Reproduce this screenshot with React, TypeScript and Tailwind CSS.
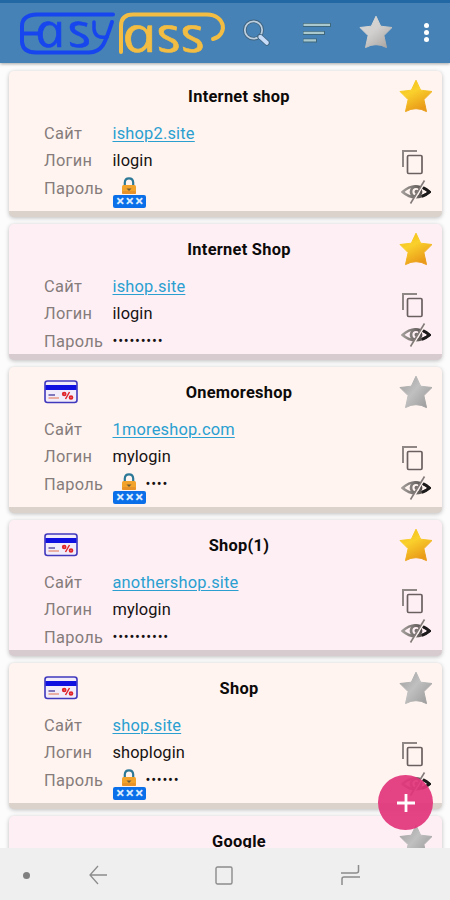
import React from "react";

type Entry = {
  title: string;
  site: string;
  login: string;
  dots: string;
  starred: boolean;
  card: boolean;
  locked: boolean;
};

const entries: Entry[] = [
  { title: "Internet shop", site: "ishop2.site", login: "ilogin", dots: "", starred: true, card: false, locked: true },
  { title: "Internet Shop", site: "ishop.site", login: "ilogin", dots: "•••••••••", starred: true, card: false, locked: false },
  { title: "Onemoreshop", site: "1moreshop.com", login: "mylogin", dots: "••••", starred: false, card: true, locked: true },
  { title: "Shop(1)", site: "anothershop.site", login: "mylogin", dots: "••••••••••", starred: true, card: true, locked: false },
  { title: "Shop", site: "shop.site", login: "shoplogin", dots: "••••••", starred: false, card: true, locked: true },
];

function Gradients() {
  return (
    <svg width="0" height="0" className="absolute">
      <defs>
        <linearGradient id="gold" x1="0" y1="0" x2="0.5" y2="1">
          <stop offset="0" stopColor="#f0bd14" />
          <stop offset="0.45" stopColor="#fad02c" />
          <stop offset="1" stopColor="#e99a18" />
        </linearGradient>
        <linearGradient id="silver" x1="0" y1="0" x2="1" y2="0.8">
          <stop offset="0" stopColor="#9c9c9c" />
          <stop offset="0.5" stopColor="#c0c0c0" />
          <stop offset="1" stopColor="#9c9c9c" />
        </linearGradient>
        <linearGradient id="silverLight" x1="0" y1="0" x2="0.8" y2="1">
          <stop offset="0" stopColor="#d8d8d8" />
          <stop offset="0.5" stopColor="#d2d0ce" />
          <stop offset="1" stopColor="#aaa7a5" />
        </linearGradient>
        <linearGradient id="eye" x1="0" y1="0" x2="30" y2="0" gradientUnits="userSpaceOnUse">
          <stop offset="0" stopColor="#a8a29f" />
          <stop offset="0.55" stopColor="#6a6462" />
          <stop offset="1" stopColor="#1c1a1a" />
        </linearGradient>
      </defs>
    </svg>
  );
}

function Star({ fill }: { fill: string }) {
  return (
    <svg width="34" height="34" viewBox="0 0 34 34" className="shrink-0">
      <path
        d="M17 1.2 L21.7 11.2 L33 12.5 L24.9 20.6 L27.5 32.6 Q22 29.5 17 29.7 Q12 29.5 6.5 32.6 L9.1 20.6 L1 12.5 L12.3 11.2 Z"
        fill={fill}
        stroke={fill}
        strokeWidth="1"
        strokeLinejoin="round"
      />
    </svg>
  );
}

function Logo() {
  return (
    <svg width="210" height="50" viewBox="17 7 210 50" fill="none" className="shrink-0 overflow-visible">
      <g stroke="#1746ee" strokeWidth="4" strokeLinecap="round">
        <path d="M113 13.5 H37 Q22 14 22 25 V41 Q23 51.5 36 51.5 H89 C102 51 105 43 112 21" />
        <path d="M23 32.5 H40" />
        <path d="M94 21 V28 Q95 38 107 36" strokeWidth="3.5" />
      </g>
      <g stroke="#f2bd42" strokeWidth="4" strokeLinecap="round">
        <path d="M121 51 V25 Q121 13.5 133 13.5 H207 C226 14 228 34 213 38" />
      </g>
      <g fontFamily="'Open Sans', sans-serif" fontStyle="italic" fontWeight="400" strokeWidth="0.6">
        <g fill="#1746ee" stroke="#1746ee" fontSize="46.500">
          <text transform="translate(38 46) scale(1.14 1) skewX(12)">a</text>
          <text transform="translate(71 46) scale(1.15 1) skewX(12)">s</text>
        </g>
        <g fill="#f2bd42" stroke="#f2bd42" fontSize="49">
          <text transform="translate(125.500 50.500) scale(1.24 1) skewX(12)">a</text>
          <text transform="translate(160 50.500) scale(1.13 1) skewX(12)">s</text>
          <text transform="translate(184 50.500) scale(1.13 1) skewX(12)">s</text>
        </g>
      </g>
    </svg>
  );
}

function SearchIcon() {
  return (
    <svg width="28" height="28" viewBox="0 0 28 28" fill="none" className="shrink-0">
      <circle cx="10.500" cy="11" r="8.7" stroke="#40627c" strokeWidth="3.6" />
      <circle cx="10.500" cy="11" r="8.7" stroke="#bccfe0" strokeWidth="1.8" />
      <path d="M17 17.5 L24 24" stroke="#40627c" strokeWidth="5.4" strokeLinecap="round" />
      <path d="M17.300 17.800 L23.8 23.8" stroke="#c6dcf8" strokeWidth="4" strokeLinecap="round" />
    </svg>
  );
}

function SortIcon() {
  return (
    <svg width="30" height="22" viewBox="0 0 30 22" fill="none" className="shrink-0">
      <path d="M1 3 H29 M1 11 H23 M1 18.500 H15" stroke="#3f687d" strokeWidth="4" />
      <path d="M1.500 2.800 H28 M1.500 10.800 H22 M1.500 18.300 H14" stroke="#a9c9cf" strokeWidth="2.200" />
    </svg>
  );
}

function CreditCard() {
  return (
    <svg width="34" height="24" viewBox="0 0 34 24" fill="none">
      <rect x="1" y="1" width="32" height="21.500" rx="2.500" fill="#f2ecfa" stroke="#4038bd" strokeWidth="1.600" />
      <rect x="1.500" y="5" width="31" height="5" fill="#1010e0" />
      <path d="M4.500 15 H11" stroke="#5a51a8" strokeWidth="1.500" />
      <path d="M4.500 18 H15" stroke="#e99a85" strokeWidth="1.500" />
      <path d="M21.500 19 L25.500 12" stroke="#e0242a" strokeWidth="1.500" />
      <circle cx="20.200" cy="14" r="1.400" stroke="#e0242a" strokeWidth="1.900" />
      <circle cx="27" cy="17.500" r="1.400" stroke="#e0242a" strokeWidth="1.900" />
    </svg>
  );
}

function Lock() {
  return (
    <svg width="16" height="18" viewBox="0 0 16 18" fill="none" className="shrink-0">
      <path d="M3.800 9 V5.500 Q4 1.400 8 1.400 Q12 1.400 12.200 5.500 V9" stroke="#2c7896" strokeWidth="2.200" />
      <rect x="1" y="8" width="14" height="9" rx="1.500" fill="#f2a32c" />
      <rect x="1" y="14" width="14" height="3" rx="1.500" fill="#e8922a" />
      <path d="M5.500 11.500 H10.500 L8 14 Z" fill="#6d5a36" />
    </svg>
  );
}

function CopyIcon() {
  return (
    <svg width="23" height="26" viewBox="0 0 23 26" fill="none">
      <path d="M2 18 V2 H16" stroke="#8f8786" strokeWidth="2" />
      <rect x="6.500" y="6.500" width="14.500" height="18" rx="1.200" stroke="#6b6060" strokeWidth="1.700" />
    </svg>
  );
}

function EyeIcon() {
  return (
    <svg width="30" height="26" viewBox="0 0 30 26" fill="none">
      <path d="M1.500 13 Q14 1.500 28.500 13 Q14 23.500 1.500 13 Z" stroke="url(#eye)" strokeWidth="2.500" />
      <path d="M22 8.600 Q25.500 10 28.500 13 Q25.500 15.800 21 17.300" stroke="#1c1a1a" strokeWidth="2.800" />
      <circle cx="15" cy="12.700" r="5" stroke="url(#eye)" strokeWidth="2.800" />
      <circle cx="15.500" cy="12.700" r="2" fill="#77706e" />
      <path d="M11 24.500 L24.300 2.500" stroke="#fff4f1" strokeWidth="1.600" />
      <path d="M9.500 24.500 L23.500 1.500" stroke="#827b79" strokeWidth="1.600" />
    </svg>
  );
}

function TitleRow({ title, card, starred }: { title: string; card: boolean; starred: boolean }) {
  return (
    <div className="grid h-[49px] shrink-0 grid-cols-[52px_1fr_52px] items-center">
      <div className="pl-[8px]">{card && <CreditCard />}</div>
      <h2 className="pt-[2px] text-center text-[16.400px] leading-6 font-bold tracking-[0.280px] text-[#0c0a0a]">{title}</h2>
      <div className="flex justify-center pt-px">
        <Star fill={starred ? "url(#gold)" : "url(#silver)"} />
      </div>
    </div>
  );
}

function EntryCard({ entry, index }: { entry: Entry; index: number }) {
  const pink = index % 2 === 1;
  return (
    <article
      className={`flex shrink-0 flex-col rounded-[5px] border-b-[6px] pl-[27px] shadow-[0_1px_4px_rgba(0,0,0,0.25)] ${
        entry.locked ? "h-[146px]" : "h-[136px]"
      } ${pink ? "border-[#d8cbd0] bg-[#feeff5]" : "border-[#dad2cb] bg-[#fff4f0]"}`}
    >
      <TitleRow title={entry.title} card={entry.card} starred={entry.starred} />
      <div className="flex min-h-0 flex-1 justify-between">
        <dl className="grid grid-cols-[68.500px_auto] grid-rows-[27px_27px_28px] items-center pl-[8px] text-[16.400px] leading-[27px]">
          <dt className="tracking-[0.280px] text-[#857c7b]">Сайт</dt>
          <dd className="tracking-[0.200px] text-[#2a9fd0] underline decoration-1 underline-offset-[1.500px]">{entry.site}</dd>
          <dt className="tracking-[0.280px] text-[#857c7b]">Логин</dt>
          <dd className="tracking-[0.080px] text-[#161212]">{entry.login}</dd>
          <dt className="tracking-[0.280px] text-[#857c7b]">Пароль</dt>
          <dd className="flex h-[27px] items-start">
            {entry.locked && (
              <span className="flex w-[33px] shrink-0 flex-col items-center pt-[2px]">
                <Lock />
                <span className="flex h-[13px] w-[33px] shrink-0 items-center justify-center rounded-[2px] bg-[#0b6fe9] pl-[3px] text-[15px] leading-none font-bold tracking-[1.500px] text-[#d8ecff]">
                  ×××
                </span>
              </span>
            )}
            <span className="text-[14.500px] leading-[27px] tracking-[0.750px] text-[#161212]">{entry.dots}</span>
          </dd>
        </dl>
        <div className="flex w-[52px] flex-col items-center justify-end pb-[6px]">
          <div className="mr-[8px]">
            <CopyIcon />
          </div>
          <div className="mt-[4px]">
            <EyeIcon />
          </div>
        </div>
      </div>
    </article>
  );
}

export default function App() {
  return (
    <div className="relative flex h-[900px] w-[450px] flex-col overflow-hidden bg-[#fcfcfc] font-[Roboto,sans-serif]">
      <Gradients />
      <header className="z-10 flex h-[63px] shrink-0 items-center border-t-[3px] border-[#2268a4] bg-[#4682b5] pl-[17px] shadow-[0_1px_3px_rgba(0,0,0,0.35)]">
        <Logo />
        <div className="ml-[16px] flex items-center">
          <SearchIcon />
          <div className="ml-[31px]">
            <SortIcon />
          </div>
          <div className="-mt-[2px] ml-[27px]">
            <Star fill="url(#silverLight)" />
          </div>
          <div className="-mt-px ml-[31px] flex flex-col gap-[2.500px]">
            <span className="size-[4.500px] rounded-full bg-white" />
            <span className="size-[4.500px] rounded-full bg-white" />
            <span className="size-[4.500px] rounded-full bg-white" />
          </div>
        </div>
      </header>

      <main className="flex min-h-0 flex-1 flex-col gap-[7px] overflow-hidden pt-[8px] pr-[8px] pl-[9px]">
        {entries.map((entry, i) => (
          <EntryCard key={entry.title} entry={entry} index={i} />
        ))}
        <article className="shrink-0 rounded-t-[5px] bg-[#feeff5] pl-[27px] shadow-[0_1px_4px_rgba(0,0,0,0.25)]">
          <TitleRow title="Google" card={false} starred={false} />
        </article>
      </main>

      <button className="absolute top-[775px] left-[378px] flex size-[55px] items-center justify-center rounded-full bg-[#e2347a]/92">
        <svg width="20" height="20" viewBox="0 0 20 20">
          <path d="M10 1 V19 M1 10 H19" stroke="#fff" strokeWidth="2.800" />
        </svg>
      </button>

      <nav className="z-10 flex h-[52px] shrink-0 items-center bg-[#efefef] pt-[2px] pl-[23px]">
        <span className="size-[7px] rounded-full bg-[#808080]" />
        <svg width="18" height="20" viewBox="0 0 18 20" fill="none" className="ml-[59px]">
          <path d="M18 10 H1 M9 1 L1 10 L9 19" stroke="#8c8c8c" strokeWidth="1.300" />
        </svg>
        <svg width="18" height="19" viewBox="0 0 18 19" fill="none" className="ml-[108px]">
          <rect x="1" y="1" width="16" height="17" rx="1.500" stroke="#8c8c8c" strokeWidth="1.400" />
        </svg>
        <svg width="19" height="20" viewBox="0 0 19 20" fill="none" className="ml-[108px]">
          <path d="M0 8 H15 Q17.500 8 17.500 6 V0 M19 12 H3 Q1 12 1 14 V20" stroke="#8c8c8c" strokeWidth="1.500" />
        </svg>
      </nav>
    </div>
  );
}
